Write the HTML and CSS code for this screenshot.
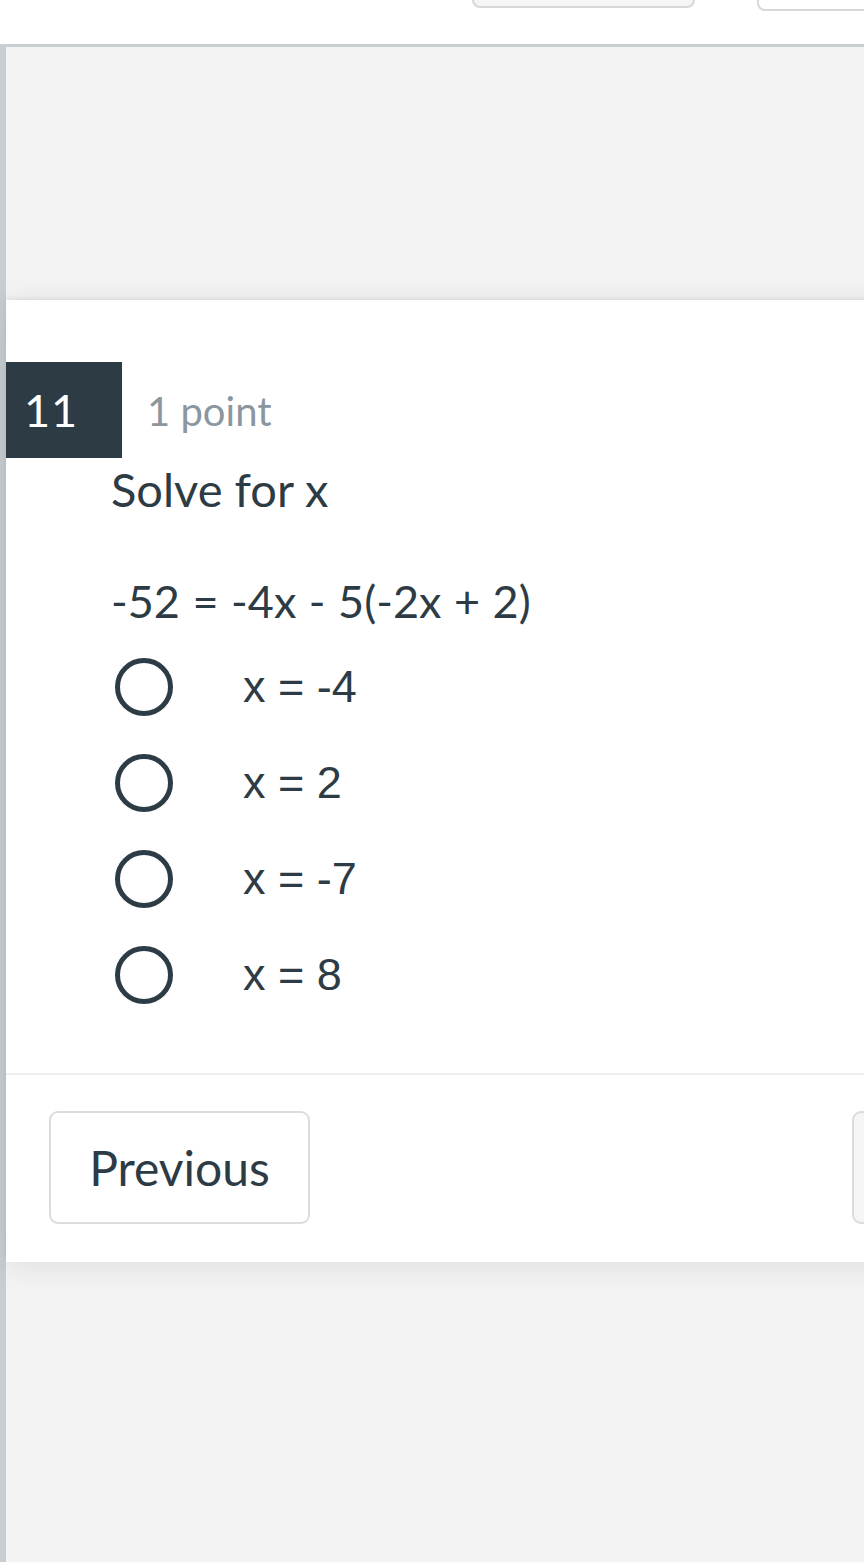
FILE: index.html
```html
<!DOCTYPE html>
<html>
<head>
<meta charset="utf-8">
<link rel="stylesheet" href="styles.css">
</head>
<body>
<header class="topbar">
  <div class="top-btn top-btn-a"></div>
  <div class="top-btn top-btn-b"></div>
</header>
<div class="page">
  <div class="spacer"></div>
  <section class="card">
    <div class="q-head">
      <div class="q-num">11</div>
      <div class="q-points">1 point</div>
    </div>
    <div class="q-body">
      <p class="q-title">Solve for x</p>
      <p class="q-eq">-52 = -4x - 5(-2x + 2)</p>
      <ul class="options">
        <li class="option"><span class="radio"></span><span class="opt-text">x = -4</span></li>
        <li class="option"><span class="radio"></span><span class="opt-text">x = 2</span></li>
        <li class="option"><span class="radio"></span><span class="opt-text">x = -7</span></li>
        <li class="option"><span class="radio"></span><span class="opt-text">x = 8</span></li>
      </ul>
    </div>
    <div class="card-foot">
      <button class="btn">Previous</button>
      <div class="btn btn-next" aria-label="Next"></div>
    </div>
  </section>
</div>
</body>
</html>
```
FILE: styles.css
```css
html, body {
  margin: 0;
  padding: 0;
}
body {
  background: #f3f3f3;
  font-family: Lato, "Open Sans", sans-serif;
  color: #2d3b45;
  overflow: hidden;
  width: 864px;
  height: 1562px;
}
.topbar {
  position: relative;
  height: 44px;
  background: #fff;
  border-bottom: 3px solid #c9ced1;
  box-sizing: content-box;
}
.top-btn {
  position: absolute;
  box-sizing: border-box;
  border: 2px solid #d7d7d7;
  border-radius: 8px;
}
.top-btn-a {
  left: 472px;
  top: -40px;
  width: 223px;
  height: 48px;
  background: #f5f5f5;
}
.top-btn-b {
  left: 757px;
  top: -40px;
  width: 140px;
  height: 51px;
  background: #fff;
}
.page {
  border-left: 6px solid #c7cdd1;
  min-height: 1520px;
  background: #f3f3f3;
}
.spacer {
  height: 253px;
}
.card {
  background: #fff;
  width: 900px;
  box-shadow: 0 -2px 4px rgba(0,0,0,0.06), 0 4px 30px rgba(0,0,0,0.09);
}
.q-head {
  display: flex;
  align-items: center;
  padding-top: 62px;
}
.q-num {
  width: 116px;
  height: 96px;
  background: #2d3b45;
  color: #fff;
  font-size: 45px;
  line-height: 96px;
  padding-left: 18px;
  box-sizing: border-box;
  letter-spacing: 1px;
}
.q-points {
  margin-left: 25px;
  font-size: 40px;
  color: #8b969e;
  margin-top: 2px;
}
.q-body {
  padding-left: 105px;
}
.q-title {
  margin: 0;
  font-size: 47px;
  line-height: 66px;
  margin-top: -2px;
}
.q-eq {
  margin: 0;
  margin-top: 54px;
  font-size: 45px;
  line-height: 50px;
  word-spacing: 1px;
}
.options {
  list-style: none;
  margin: 13px 0 0 0;
  padding: 0;
}
.option {
  display: flex;
  align-items: center;
  height: 96px;
}
.radio {
  width: 58px;
  height: 58px;
  box-sizing: border-box;
  border: 5px solid #2d3b45;
  border-radius: 50%;
  margin-left: 4px;
}
.opt-text {
  margin-left: 70px;
  font-family: "Liberation Sans", Arial, sans-serif;
  font-size: 45px;
  color: #2d3b45;
}
.card-foot {
  margin-top: 50px;
  border-top: 2px solid #efefef;
  display: flex;
  justify-content: space-between;
  padding: 36px 0 38px 43px;
}
.btn {
  font-family: Lato, sans-serif;
  font-size: 48px;
  color: #2d3b45;
  background: #fff;
  border: 2px solid #dcdcdc;
  border-radius: 9px;
  width: 261px;
  height: 113px;
  padding: 0;
  box-sizing: border-box;
}
.btn-next {
  width: 60px;
  background: #f5f5f5;
  margin-left: auto;
  position: relative;
  left: 6px;
}
```
